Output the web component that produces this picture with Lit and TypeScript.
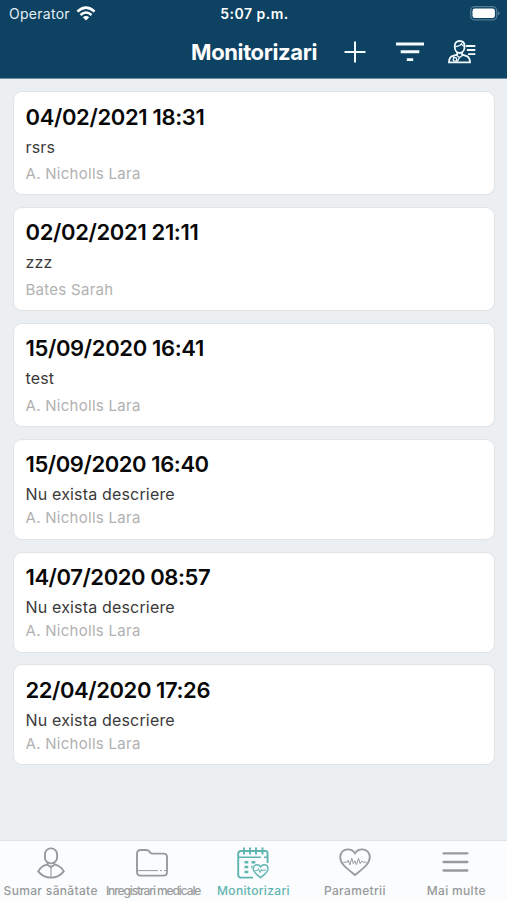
import { LitElement, html, css, svg } from "lit";
import { customElement, property } from "lit/decorators.js";
import { classMap } from "lit/directives/class-map.js";

interface Entry { date: string; note: string; doctor: string; compact?: boolean }

const entries: Entry[] = [
  { date: "04/02/2021 18:31", note: "rsrs", doctor: "A. Nicholls Lara" },
  { date: "02/02/2021 21:11", note: "zzz", doctor: "Bates Sarah" },
  { date: "15/09/2020 16:41", note: "test", doctor: "A. Nicholls Lara" },
  { date: "15/09/2020 16:40", note: "Nu exista descriere", doctor: "A. Nicholls Lara", compact: true },
  { date: "14/07/2020 08:57", note: "Nu exista descriere", doctor: "A. Nicholls Lara", compact: true },
  { date: "22/04/2020 17:26", note: "Nu exista descriere", doctor: "A. Nicholls Lara", compact: true },
];

const heart = "M16 28 C10 23 1.2 17.5 1.2 10.2 C1.2 5.2 4.8 2.4 8.8 2.4 C12.2 2.4 14.6 4 16 6.4 C17.4 4 19.8 2.4 23.2 2.4 C27.2 2.4 30.8 5.2 30.8 10.2 C30.8 17.5 22 23 16 28 Z";

const icons = {
  person: svg`
    <rect x="9.9" y="1.4" width="12.2" height="15" rx="6"/>
    <path d="M12.6 15.6 V17.8 L16 20 L19.4 17.8 V15.6"/>
    <path d="M12.4 17.6 C7.5 18.4 5.2 20.4 3.2 24.4 C6.5 28.6 11 30.6 16 30.6 C21 30.6 25.5 28.6 28.8 24.4 C26.8 20.4 24.5 18.4 19.6 17.6"/>
    <path d="M16 20 V30" stroke-width="1.1"/>`,
  folder: svg`
    <path d="M4.5 3 H10.5 Q12 3 13 4.2 L14.2 5.7 Q15 6.6 16.4 6.6 H27.5 Q31 6.6 31 10 V25 Q31 28.6 27.5 28.6 H4.5 Q1 28.6 1 25 V6.5 Q1 3 4.5 3 Z"/>
    <path d="M2 23.6 H22 M24 23.6 H26 M28 23.6 H30" stroke-width="1"/>`,
  calendar: svg`
    <path d="M30.6 16 V6.4 Q30.6 4 28 4 H4 Q1.2 4 1.2 6.8 V27.8 Q1.2 30.6 4 30.6 H16" stroke-width="1.9"/>
    <path d="M1.5 10.2 H24 M27 10.2 H30.5" stroke-width="1.4"/>
    <path d="M7 .6 V7.5 M13 .6 V7.5 M19 .6 V7.5 M25.5 .6 V7.5" stroke-width="1.9"/>
    <path d="M7.5 15.3 H11.3 M14.5 15.3 H18.3 M7.5 20 H11.3 M7.5 25 H11.3 M14.3 20 H15.5" stroke-width="2.5"/>
    <g transform="translate(15.6 16.6) scale(.5)"><path d=${heart} stroke-width="2.8"/><path d="M5 14 H10 L12 10 L15 18 L18 11 L20 15 L22 13 H27" stroke-width="2"/></g>`,
  heart: svg`
    <path d=${heart} stroke-width="1.8"/>
    <path d="M4.5 15.2 H8 L9.3 13.1 L10.8 17.9 L12.8 11.2 L14.3 16.6 L15.8 13.9 L17.5 17.7 L19.5 11.4 L21.2 16.6 L22.8 13.9 L24 15.2 H27.5" stroke-width="1"/>`,
  menu: svg`<path d="M3.6 6.4 H27.4 M3.6 15 H27.4 M3.6 23.5 H27.4" stroke-width="2.3" stroke-linecap="round"/>`,
};

@customElement("status-bar")
class StatusBar extends LitElement {
  static styles = css`
    :host { display: grid; grid-template-columns: 1fr auto 1fr; align-items: center; height: 27px; padding: 0 7px 0 9px; color: #e6eef4; }
    .carrier { display: flex; align-items: center; gap: 6px; font-size: 14px; letter-spacing: .28px; }
    .time { font-size: 14px; font-weight: 600; letter-spacing: .5px; color: #fff; }
    .battery { justify-self: end; display: block; margin-top: -1px; }
    svg { display: block; }
    .wifi { margin-top: -1px; }
  `;
  render() {
    return html`
      <div class="carrier"><span>Operator</span>
        <svg class="wifi" width="20" height="15" viewBox="0 0 20 15" fill="none" stroke="#fff" stroke-width="2.5">
          <path d="M1.4 5.5 Q10 -2.3 18.6 5.5"/><path d="M4.5 9 Q10 4 15.5 9"/>
          <path d="M6.8 11.2 Q10 8.6 13.2 11.2 L10 14.5 Z" fill="#fff" stroke="none"/>
        </svg>
      </div>
      <span class="time">5:07 p.m.</span>
      <svg class="battery" width="30" height="15" viewBox="0 0 30 15">
        <rect x=".7" y=".7" width="26" height="13.2" rx="4" fill="none" stroke="#537b95" stroke-width="1.3"/>
        <rect x="2.5" y="2.5" width="22.4" height="9.6" rx="2.4" fill="#fff"/>
        <path d="M28.1 5 Q30.8 7.3 28.1 9.6 Z" fill="#6a8ca4"/>
      </svg>`;
  }
}

@customElement("title-bar")
class TitleBar extends LitElement {
  static styles = css`
    :host { display: flex; align-items: center; justify-content: flex-end; height: 51px; box-sizing: border-box; padding: 0 31px 1px 0; color: #fff; }
    h1 { margin: 0 27px 1px 0; font-size: 22px; line-height: 28px; font-weight: 700; letter-spacing: -.38px; }
    svg { display: block; fill: none; stroke: #f2fbff; }
    .add { margin-right: 30px; }
    .filter { margin-right: 24px; }
  `;
  render() {
    return html`
      <h1>Monitorizari</h1>
      <svg class="add" width="22" height="22" viewBox="0 0 22 22" stroke-width="2"><path d="M11 .5 V21.5 M.5 11 H21.5"/></svg>
      <svg class="filter" width="28" height="22" viewBox="0 0 28 22" stroke-width="2.9"><path d="M0 3 H28 M4.7 10.8 H23.3 M10.8 18.6 H17.2"/></svg>
      <svg width="28" height="24" viewBox="0 0 28 24" stroke-width="1.8">
        <path d="M6.7 6.2 C6.7 3 8.6 1 11.5 1 C14.8 1 16.6 3 16.6 6.2 C16.6 10 14.8 13 11.6 13 C8.6 13 6.7 10 6.7 6.2 Z"/>
        <path d="M7 6.6 Q11.8 6.2 13.4 3.8 Q14.2 5.7 16.4 6.5" stroke-width="1.2"/>
        <path d="M9.2 12 V14.5 L4.2 16.2 Q1.2 17.4 1 22.3 H22 Q21.8 17.4 18.8 16.2 L14 14.5 V12"/>
        <path d="M8.4 15.2 L11.5 17.5 L14.8 15.2 M5.4 16.4 L6.4 18.2" stroke-width="1.3"/>
        <circle cx="7" cy="19.4" r="1.8" stroke-width="1.3"/>
        <path d="M9 22 L11.4 17.8" stroke-width="1.3"/>
        <path d="M18 6 H27.3 M18.8 10 H27.3 M20 14.2 H27.3" stroke-width="1.8"/>
      </svg>`;
  }
}

@customElement("entry-card")
class EntryCard extends LitElement {
  @property({ attribute: false }) entry!: Entry;
  static styles = css`
    :host { display: block; }
    .card { box-sizing: border-box; height: 104px; padding: 10.5px 12px; background: #fff; border: 1px solid #e0e4e7; border-radius: 9px; }
    .date { font-size: 22px; line-height: 28px; font-weight: 600; color: #080808; letter-spacing: -.35px; white-space: nowrap; }
    .note { margin-top: 5px; font-size: 16px; line-height: 22px; color: #3a3a3a; letter-spacing: .17px; }
    .doctor { margin-top: 6.5px; font-size: 15px; line-height: 20px; color: #b1b1b1; letter-spacing: .28px; }
    .compact { height: 101px; }
    .compact .date { letter-spacing: -.42px; }
    .compact .doctor { margin-top: 3px; }
  `;
  render() {
    const e = this.entry;
    return html`<div class=${classMap({ card: true, compact: !!e.compact })}>
      <div class="date">${e.date}</div><div class="note">${e.note}</div><div class="doctor">${e.doctor}</div>
    </div>`;
  }
}

@customElement("tab-bar")
class TabBar extends LitElement {
  static styles = css`
    :host { display: grid; grid-template-columns: repeat(5, 1fr); height: 60px; box-sizing: border-box; border-top: 1px solid #dfe3e6; background: #fafcfd; }
    .tab { display: flex; flex-direction: column; align-items: center; padding-top: 6px; color: #989a9b; min-width: 0; }
    svg { display: block; fill: none; stroke: currentColor; stroke-width: 1.9; flex: none; }
    .label { margin-top: 4px; font-size: 12px; line-height: 16px; font-weight: 500; white-space: nowrap; letter-spacing: .33px; }
    .tight { letter-spacing: -1.1px; padding-left: 2px; }
    .active { color: #5fb5b0; }
  `;
  render() {
    const tabs = [
      { icon: icons.person, label: "Sumar sănătate" },
      { icon: icons.folder, label: "Inregistrari medicale", tight: true },
      { icon: icons.calendar, label: "Monitorizari", active: true },
      { icon: icons.heart, label: "Parametrii" },
      { icon: icons.menu, label: "Mai multe" },
    ];
    return tabs.map((t) => html`<div class=${classMap({ tab: true, active: !!t.active })}>
      <svg width="32" height="32" viewBox="0 0 32 32">${t.icon}</svg>
      <span class=${classMap({ label: true, tight: !!t.tight })}>${t.label}</span></div>`);
  }
}

@customElement("app-root")
class AppRoot extends LitElement {
  static styles = css`
    :host { display: flex; flex-direction: column; height: 900px; overflow: hidden; background: #ebeff2; font-family: Inter, "Liberation Sans", sans-serif; }
    header { background: #0d4262; border-bottom: 1px solid #6d8da0; flex: none; }
    main { flex: 1; display: flex; flex-direction: column; gap: 11.9px; padding: 12px 12px 0 12.5px; }
  `;
  render() {
    return html`
      <header><status-bar></status-bar><title-bar></title-bar></header>
      <main>${entries.map((e) => html`<entry-card .entry=${e}></entry-card>`)}</main>
      <tab-bar></tab-bar>`;
  }
}
